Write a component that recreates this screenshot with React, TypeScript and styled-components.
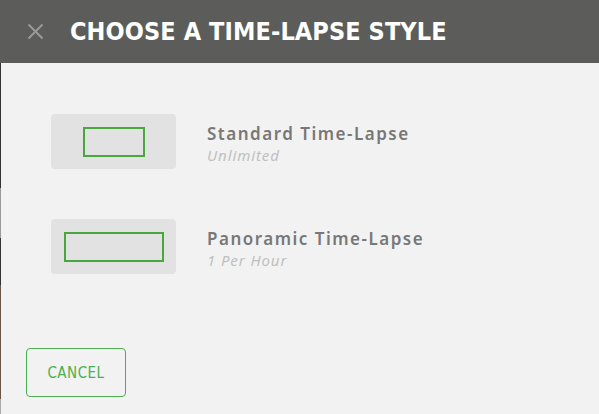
import { createGlobalStyle } from 'styled-components';
import styled from 'styled-components';

const GlobalStyle = createGlobalStyle`
	html, body {
		margin: 0;
		padding: 0;
		background: #f2f2f2;
	}
	* {
		box-sizing: border-box;
	}
`;

const options = [
	{ title: 'Standard Time-Lapse', note: 'Unlimited', frameWidth: 62 },
	{ title: 'Panoramic Time-Lapse', note: '1 Per Hour', frameWidth: 100 },
];

const CloseIcon = () => (
	<svg width="17" height="17" viewBox="0 0 17 17" fill="none">
		<path d="M1.5 1.5 L15.5 15.5 M15.5 1.5 L1.5 15.5" stroke="#9a9b98" strokeWidth="2" />
	</svg>
);

const App = () => {
	return (
		<Dialog>
			<GlobalStyle />
			<Header>
				<CloseButton aria-label="close">
					<CloseIcon />
				</CloseButton>
				<Title>CHOOSE A TIME-LAPSE STYLE</Title>
			</Header>
			<Body>
				<OptionList>
					{options.map((option) => (
						<OptionRow key={option.title}>
							<Thumb>
								<Frame $width={option.frameWidth} />
							</Thumb>
							<OptionText>
								<OptionTitle>{option.title}</OptionTitle>
								<OptionNote>{option.note}</OptionNote>
							</OptionText>
						</OptionRow>
					))}
				</OptionList>
				<Footer>
					<CancelButton>CANCEL</CancelButton>
				</Footer>
			</Body>
		</Dialog>
	);
};

export default App;

const Dialog = styled.div`
	width: 599px;
	height: 414px;
	display: flex;
	flex-direction: column;
	background: #f2f2f2;
	overflow: hidden;
`;

const Header = styled.div`
	height: 63px;
	flex-shrink: 0;
	display: flex;
	align-items: center;
	padding-left: 27px;
	gap: 26px;
	background: #5c5d5a;
`;

const CloseButton = styled.div`
	display: flex;
	align-items: center;
	justify-content: center;
	width: 17px;
	height: 17px;
	cursor: pointer;
`;

const Title = styled.h1`
	margin: 0;
	color: #ffffff;
	font-family: 'DejaVu Sans Condensed', 'DejaVu Sans', sans-serif;
	font-weight: 700;
	font-size: 25px;
	letter-spacing: 0.1px;
	line-height: 1.2;
`;

const Body = styled.div`
	flex: 1;
	display: flex;
	flex-direction: column;
	justify-content: space-between;
	border-left: 1px solid;
	border-image: linear-gradient(
			to bottom,
			#333333 0px,
			#333333 125px,
			#9a9a9a 125px,
			#9a9a9a 175px,
			#333333 175px,
			#333333 222px,
			#6b5548 222px,
			#6b5548 335px,
			#aaaaaa 335px
		)
		1;
`;

const OptionList = styled.div`
	display: flex;
	flex-direction: column;
	gap: 50px;
	padding: 51px 0 0 50px;
`;

const OptionRow = styled.div`
	display: flex;
	align-items: center;
	gap: 31px;
	cursor: pointer;
`;

const Thumb = styled.div`
	width: 125px;
	height: 55px;
	display: flex;
	align-items: center;
	justify-content: center;
	background: #e2e2e2;
	border-radius: 4px;
`;

const Frame = styled.div<{ $width: number }>`
	width: ${({ $width }) => $width}px;
	height: 30px;
	border: 2px solid #48a83d;
`;

const OptionText = styled.div`
	display: flex;
	flex-direction: column;
	padding-top: 3px;
	font-family: 'Noto Sans', 'Open Sans', sans-serif;
`;

const OptionTitle = styled.div`
	color: #787878;
	font-size: 17px;
	font-weight: 600;
	line-height: 23px;
	letter-spacing: 1.5px;
`;

const OptionNote = styled.div`
	color: #c0c0c0;
	font-size: 15px;
	font-style: italic;
	line-height: 20px;
	letter-spacing: 0.9px;
`;

const Footer = styled.div`
	padding: 0 0 17px 25px;
`;

const CancelButton = styled.button`
	width: 100px;
	height: 49px;
	background: transparent;
	border: 1px solid #4caf50;
	border-radius: 4px;
	color: #4caf50;
	font-family: 'DejaVu Sans Condensed', 'DejaVu Sans', sans-serif;
	font-size: 15px;
	letter-spacing: 0.5px;
	cursor: pointer;
`;
